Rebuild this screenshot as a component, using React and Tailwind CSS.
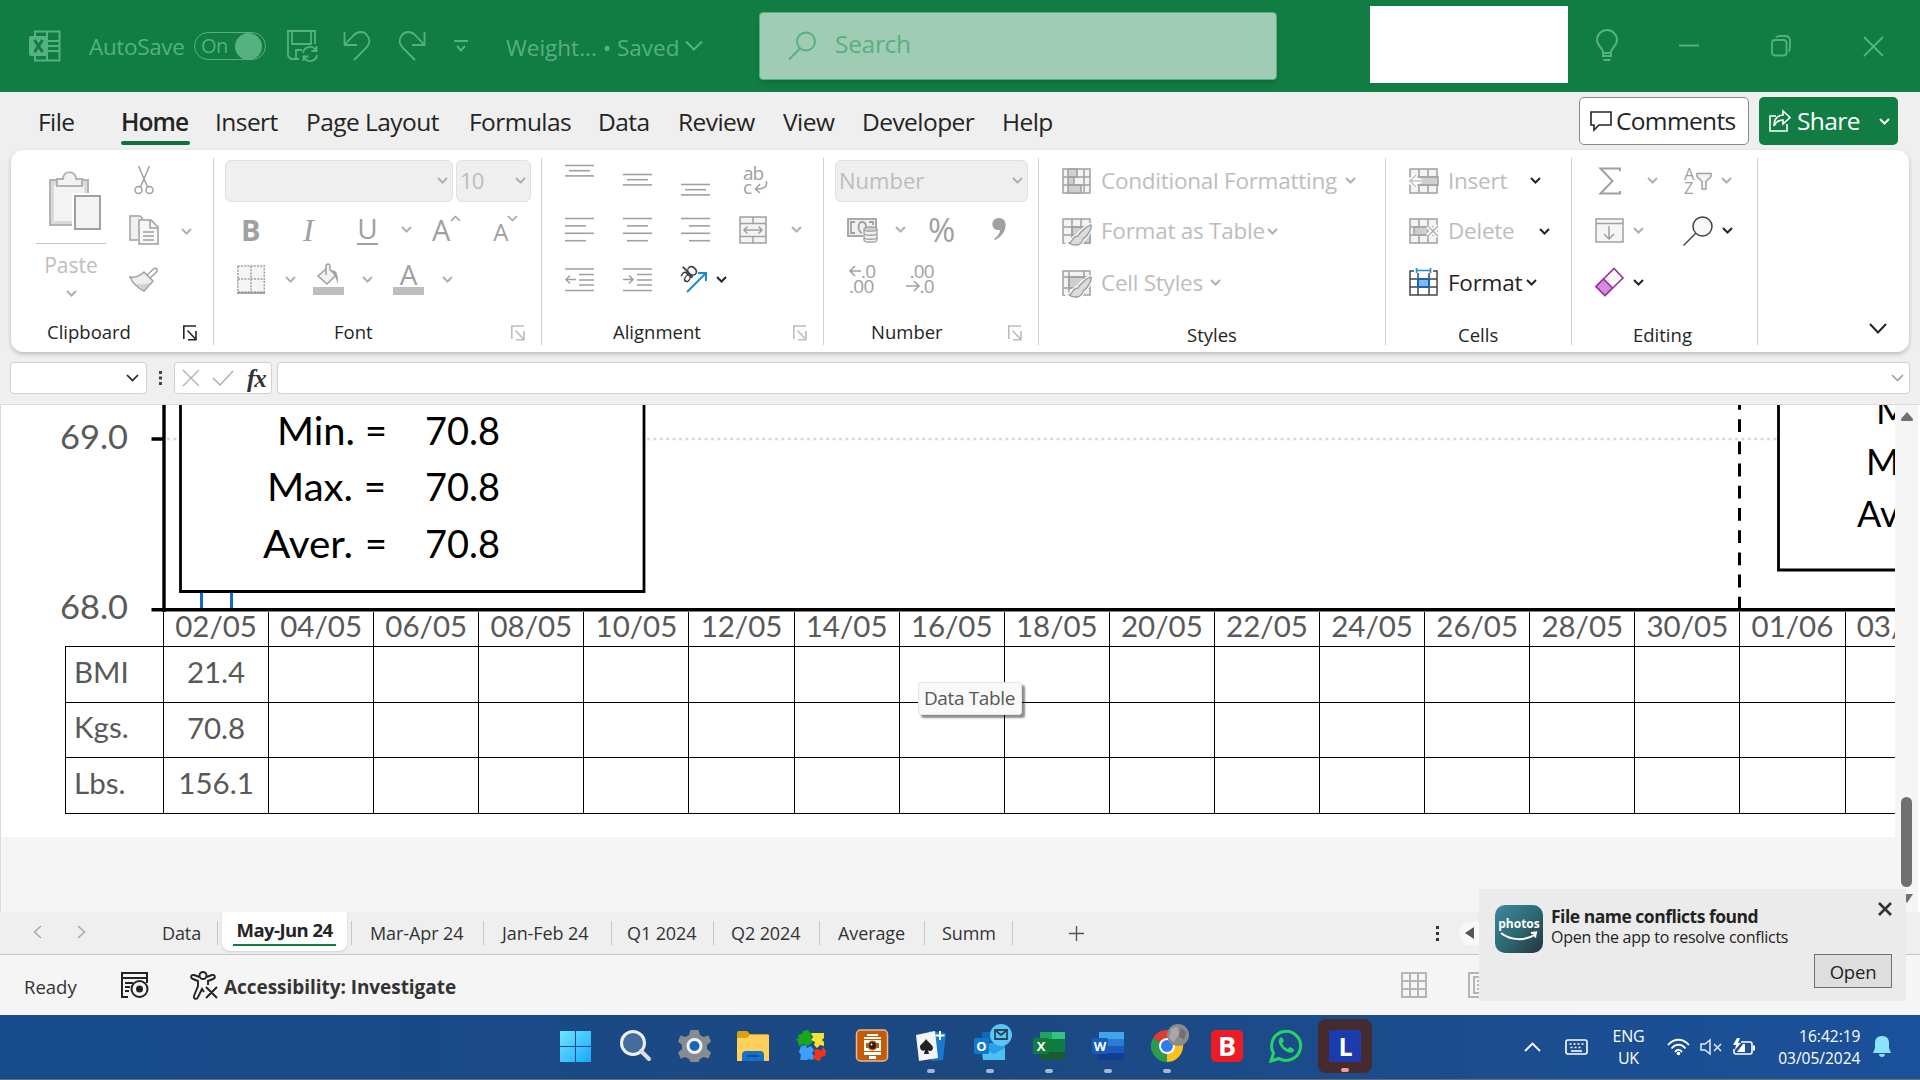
import React from 'react';

const GRAY = '#a0a0a0';
const DARK = '#242424';
const MINT = '#55b17f';

const Ico = ({ w, h, className = '', stroke = GRAY, sw = 1.5, children }) => (
  <svg
    width={w}
    height={h}
    viewBox={`0 0 ${w} ${h}`}
    fill="none"
    stroke={stroke}
    strokeWidth={sw}
    className={`shrink-0 overflow-visible ${className}`}
  >
    {children}
  </svg>
);

const Chev = ({ className = '', color = '#b0b0b0' }) => (
  <Ico w={11} h={7} className={className} stroke={color} sw={2}>
    <path d="M1 1l4.500 4.500L10 1" />
  </Ico>
);

const Launcher = ({ className = '', color = '#bdbdbd' }) => (
  <Ico w={14} h={16} className={className} stroke={color} sw={1.6}>
    <path d="M.8 14V1H13M4.500 5.500l8 8.500M13 6v8.800H5" />
  </Ico>
);

const Group = ({ className, label, labelClass, launcher, children }) => (
  <div className={`flex h-[187px] shrink-0 flex-col whitespace-nowrap border-r border-[#d1d1d1] ${className}`}>
    {children}
    <div className="flex h-[38px] items-end">
      <span className={`text-[18.500px] leading-[19px] text-[#242424] ${labelClass}`}>{label}</span>
      {launcher}
    </div>
  </div>
);

const TitleBar = () => (
  <div className="flex h-[92px] shrink-0 items-center bg-[#117d43] text-[#55b17f]">
    <Ico w={32} h={32} className="ml-[29px]" stroke={MINT} sw={2}>
      <path d="M6 6V1.500h24.500v29H6V26M18 1v30M6 11h24M18 16h12M6 21h24" />
      <rect x="0" y="6" width="19" height="20" rx="2" fill={MINT} stroke="none" />
      <path d="M5.500 10l8 12M13.500 10l-8 12" stroke="#117d43" strokeWidth="3" />
    </Ico>
    <span className="ml-[28px] w-[105px] whitespace-nowrap pt-[2px] text-[22.500px] tracking-[-0.350px]">AutoSave</span>
    <div className="flex h-[28px] w-[72px] items-center rounded-full border-[1.500px] border-[#55b17f] pl-[6px]">
      <span className="w-[34px] text-[20px] leading-none tracking-[-0.500px]">On</span>
      <span className="h-[27px] w-[27px] shrink-0 rounded-full bg-[#55b17f]" />
    </div>
    <Ico w={31} h={32} className="ml-[21px]" stroke={MINT} sw={1.8}>
      <path d="M12 29H4l-3-3V1h27v13M5 1v13h19V1M9 28v-8h6" />
      <path d="M16 23a7 7 0 0 1 13-2.500M29.500 16v5h-5M30 25a7 7 0 0 1-13 2.500M16.500 31v-4.500h5" />
    </Ico>
    <Ico w={28} h={30} className="ml-[25px]" stroke={MINT} sw={1.8}>
      <path d="M1.500 1v13H14M1.500 14L11 4c4-4 10-4 13 0s3 9-1 13L11 29" />
    </Ico>
    <Ico w={28} h={30} className="ml-[27px]" stroke={MINT} sw={1.8}>
      <path d="M26.500 1v13H14M26.500 14L17 4C13 0 7 0 4 4s-3 9 1 13l12 12" />
    </Ico>
    <Ico w={14} h={14} className="ml-[28px]" stroke={MINT} sw={2}>
      <path d="M0 2h14M3 7l4 4.500L11 7" />
    </Ico>
    <span className="ml-[38px] w-[180px] whitespace-nowrap pt-[4px] text-[22.500px]">Weight... • Saved</span>
    <Ico w={18} h={12} className="-ml-px" stroke={MINT} sw={2}>
      <path d="M1 1.500l8 8 8-8" />
    </Ico>
    <div className="ml-[56px] flex h-[68px] w-[518px] items-center rounded border border-[#55b17f] bg-[#a0cbb5] shadow-md">
      <Ico w={29} h={30} className="ml-[28px]" stroke={MINT} sw={2}>
        <circle cx="18" cy="10.500" r="9" />
        <path d="M12 17.500L1 28.500" />
      </Ico>
      <span className="ml-[18px] pb-[3px] text-[24.500px] tracking-[-0.300px]">Search</span>
    </div>
    <div className="mb-[3px] ml-[93px] h-[77px] w-[198px] bg-white" />
    <Ico w={24} h={32} className="ml-[27px]" stroke={MINT} sw={2}>
      <path d="M8 22c0-4-6-6-6-12a10 10 0 0 1 20 0c0 6-6 8-6 12v4H8zM8 23h8M8.500 30h7" />
    </Ico>
    <Ico w={20} h={4} className="ml-[60px]" stroke={MINT} sw={2}>
      <path d="M0 1.500h20" />
    </Ico>
    <Ico w={20} h={22} className="ml-[72px]" stroke={MINT} sw={1.8}>
      <rect x="1" y="5" width="14.500" height="15.500" rx="3" />
      <path d="M5 2.500C6 1 7 1 9 1h5c3 0 5 2 5 5v6c0 2 0 3-1.500 4.500" />
    </Ico>
    <Ico w={21} h={21} className="ml-[72px]" stroke={MINT} sw={1.8}>
      <path d="M1 1l19 19M20 1L1 20" />
    </Ico>
  </div>
);

const MENU = [
  ['File', 'w-[83px]'],
  ['Home', 'w-[94px]'],
  ['Insert', 'w-[91px]'],
  ['Page Layout', 'w-[163px]'],
  ['Formulas', 'w-[129px]'],
  ['Data', 'w-[80px]'],
  ['Review', 'w-[105px]'],
  ['View', 'w-[79px]'],
  ['Developer', 'w-[140px]'],
  ['Help', 'w-[60px]'],
];

const MenuBar = () => (
  <div className="flex h-[58px] shrink-0 items-center bg-[#efefef] text-[24.500px] tracking-[-0.550px] text-[#242424]">
    <div className="flex h-full flex-1 items-center pl-[38px]">
      {MENU.map(([name, width]) => (
        <div key={name} className={`shrink-0 whitespace-nowrap pt-[2px] ${width}`}>
          {name === 'Home' ? (
            <div className="w-[69px] pt-[4px] font-semibold tracking-[-0.950px]">
              <div className="leading-[38px]">{name}</div>
              <div className="h-[4px] rounded-full bg-[#0f703b]" />
            </div>
          ) : (
            name
          )}
        </div>
      ))}
    </div>
    <div className="flex h-[48px] w-[170px] items-center rounded-[5px] border border-[#8a8a8a] bg-white pl-[10px]">
      <Ico w={22} h={22} stroke={DARK} sw={1.6}>
        <path d="M1 2h20v13H9l-5 5v-5H1z" />
      </Ico>
      <span className="ml-[4px] tracking-[-0.650px]">Comments</span>
    </div>
    <div className="ml-[10px] mr-[22px] flex h-[48px] w-[139px] items-center rounded-[5px] bg-[#117d43] pl-[10px] text-white">
      <Ico w={23} h={22} stroke="#fff" sw={1.6}>
        <path d="M7 6H1v15h17v-7M14 1l7 6.500-7 6.500v-4c-4 0-7 2-9 6 0-6 3-10.500 9-11z" />
      </Ico>
      <span className="ml-[5px] w-[82px] tracking-[-0.600px]">Share</span>
      <Chev color="#fff" />
    </div>
  </div>
);

const ClipboardGroup = () => (
  <Group className="w-[203px]" label="Clipboard" labelClass="ml-[36px] w-[136px]" launcher={<Launcher color={DARK} />}>
    <div className="flex h-[145px]">
      <div className="ml-[25px] flex w-[70px] flex-col items-center">
        <Ico w={54} h={60} className="ml-[8px] mt-[13px]" sw={2}>
          <rect x="2" y="9" width="38" height="45" fill="#dadada" stroke="#b3b3b3" />
          <rect x="6" y="14" width="30" height="36" fill="#f3f3f3" stroke="none" />
          <path d="M9 15V8h6c0-9 13-9 13 0h6v7z" fill="#f3f3f3" stroke="#b3b3b3" />
          <path d="M24 22h30v38H24z" fill="#fff" stroke="none" />
          <rect x="27" y="25" width="25" height="33" fill="#f3f3f3" />
        </Ico>
        <div className="mt-[12px] h-px w-[70px] shrink-0 bg-[#c4c4c4]" />
        <div className="mt-[9px] text-[21px] leading-[24px] text-[#bdbdbd]">Paste</div>
        <Chev className="mt-[13px]" />
      </div>
      <div className="ml-[22px] flex w-[32px] flex-col items-center">
        <Ico w={20} h={30} className="mt-[7px]">
          <circle cx="4.500" cy="25" r="3.500" />
          <circle cx="15.500" cy="25" r="3.500" />
          <path d="M4.500 1l9 21M15.500 1l-9 21" />
        </Ico>
        <Ico w={30} h={30} className="mt-[20px]">
          <path d="M9 25H1V1h10l3 3" fill="#f0f0f0" />
          <path d="M10 5h12l7 7v17H10z" fill="#f7f7f7" />
          <path d="M21 5v8h8M14 17h11M14 21h11M14 25h11" />
        </Ico>
        <Ico w={30} h={26} className="mt-[22px]">
          <path d="M1 10c6 1 10-1 14-5l9 9-9 10C9 21 4 17 1 10z" fill="#eee" />
          <path d="M6 17c6 1 10 0 15-1l-6 7z" fill="#cfcfcf" stroke="none" />
          <path d="M18 8l7-6.500c2-1 4 1 3 3L21 11" />
        </Ico>
      </div>
      <Chev className="ml-[21px] mt-[70px]" />
    </div>
  </Group>
);

const FontGroup = () => (
  <Group className="w-[328px]" label="Font" labelClass="ml-[120px] w-[177px]" launcher={<Launcher />}>
    <div className="flex h-[46px] items-center">
      <div className="ml-[11px] flex h-[42px] w-[228px] items-center justify-end rounded-md border border-[#e0e0e0] bg-[#efefef] pr-[4px]">
        <Chev />
      </div>
      <div className="ml-[3px] flex h-[42px] w-[75px] items-center justify-between rounded-md border border-[#e0e0e0] bg-[#efefef] pl-[3px] pr-[4px] text-[22px] tracking-[-0.800px] text-[#bdbdbd]">
        10
        <Chev />
      </div>
    </div>
    <div className="flex h-[52px] items-center leading-none text-[#a0a0a0]">
      <span className="ml-[27px] w-[62px] text-[29px] font-bold">B</span>
      <span className="w-[54px] font-[Liberation_Serif] text-[32px] italic">I</span>
      <span className="flex h-[31px] w-[21px] justify-center border-b-2 border-[#a0a0a0] text-[28px]">U</span>
      <Chev className="ml-[23px]" />
      <span className="ml-[20px] text-[29px]">A</span>
      <Ico w={11} h={7} className="mb-[22px]" sw={1.5}>
        <path d="M1 6l4.500-4.500L10 6" />
      </Ico>
      <span className="ml-[32px] pt-[4px] text-[24px]">A</span>
      <Ico w={11} h={7} className="mb-[22px] ml-[-2px]" sw={1.5}>
        <path d="M1 1l4.500 4.500L10 1" />
      </Ico>
    </div>
    <div className="flex h-[47px] items-center">
      <Ico w={28} h={29} className="ml-[23px]">
        <path d="M.8 1h26.500v26H.8zM14 1v26M1 14h26" strokeDasharray="2 1.200" fill="#f5f5f5" />
        <path d="M0 28h28" stroke="#8a8a8a" />
      </Ico>
      <Chev className="ml-[20px]" />
      <Ico w={31} h={32} className="ml-[17px]">
        <path d="M13 6L5 13l9 8 9-9-6-5V4c0-4-4-4-4 0v8" fill="#f3f3f3" />
        <path d="M18 7c6 0 7 4 7 14-2-4-2-7-4-9z" fill="#a0a0a0" stroke="none" />
        <rect x="0" y="24" width="31" height="8" fill="#bdbdbd" stroke="none" />
      </Ico>
      <Chev className="ml-[18px]" />
      <div className="ml-[20px] flex h-[32px] w-[31px] flex-col items-center border-b-[8px] border-[#bdbdbd] text-[28px] leading-[22px] text-[#a0a0a0]">A</div>
      <Chev className="ml-[18px]" />
    </div>
  </Group>
);

// ruled lines, each given as [start, end]
const Lines = ({ rows, gap = 7.4, className }) => (
  <Ico w={29} h={25} className={className} sw={1.6}>
    {rows.map(([a, b], i) => (
      <path key={i} d={`M${a} ${1.5 + i * gap}H${b}`} />
    ))}
  </Ico>
);

const AlignmentGroup = () => (
  <Group className="w-[282px]" label="Alignment" labelClass="ml-[71px] w-[180px]" launcher={<Launcher />}>
    <div className="flex h-[46px] items-center">
      <Lines className="mb-[8px] ml-[23px]" gap={5.2} rows={[[0, 29], [4, 25], [0, 29]]} />
      <Lines className="mt-[10px] ml-[29px]" gap={5.2} rows={[[0, 29], [4, 25], [0, 29]]} />
      <Lines className="mt-[30px] ml-[29px]" gap={5.2} rows={[[0, 29], [4, 25], [0, 29]]} />
      <div className="ml-[33px] flex w-[26px] flex-col text-[19px] leading-[13px] text-[#a0a0a0]">
        <span className="tracking-[-1px]">ab</span>
        <span className="flex items-center">
          c
          <Ico w={14} h={14} className="ml-[2px]">
            <path d="M12 1c2 5-1 8-10 8M6 4L1.500 9 6 13" />
          </Ico>
        </span>
      </div>
    </div>
    <div className="flex h-[52px] items-center">
      <Lines className="ml-[23px]" rows={[[0, 29], [0, 21], [0, 29], [0, 21]]} />
      <Lines className="ml-[29px]" rows={[[0, 29], [4, 25], [0, 29], [4, 25]]} />
      <Lines className="ml-[29px]" rows={[[0, 29], [8, 29], [0, 29], [8, 29]]} />
      <Ico w={28} h={28} className="ml-[29px]">
        <rect x="1" y="1" width="26" height="26" fill="#f3f3f3" />
        <path d="M1 7.500h26M1 20.500h26M14 1v6.500M14 20.500V27M5 14h18M8.500 10.500L5 14l3.500 3.500M19.500 10.500L23 14l-3.500 3.500" />
      </Ico>
      <Chev className="ml-[24px]" />
    </div>
    <div className="flex h-[47px] items-center">
      <Ico w={29} h={25} className="ml-[23px]">
        <path d="M0 2h29M14 7.500h15M14 13h15M14 18h15M0 23.500h29M1 12.500h10M5 8.500l-4 4 4 4" />
      </Ico>
      <Ico w={29} h={25} className="ml-[29px]">
        <path d="M0 2h29M14 7.500h15M14 13h15M14 18h15M0 23.500h29M0 12.500h10M6 8.500l4 4-4 4" />
      </Ico>
      <Ico w={30} h={30} className="ml-[26px]" stroke="#1e88d2" sw={2}>
        <path d="M9 28L27 10M20 9h8v8" />
        <text transform="translate(8 20) rotate(-45)" fill="#333" stroke="none" fontSize="19" textLength="19">ab</text>
      </Ico>
      <Chev className="ml-[8px]" color={DARK} />
    </div>
  </Group>
);

const NumberGroup = () => (
  <Group className="w-[215px]" label="Number" labelClass="ml-[47px] w-[137px]" launcher={<Launcher />}>
    <div className="flex h-[46px] items-center">
      <div className="ml-[11px] flex h-[42px] w-[193px] items-center justify-between rounded-md border border-[#e0e0e0] bg-[#efefef] pl-[3px] pr-[4px] text-[22px] text-[#bdbdbd]">
        Number
        <Chev />
      </div>
    </div>
    <div className="flex h-[52px] items-center">
      <Ico w={31} h={26} className="ml-[23px]" sw={1.8}>
        <rect x="1" y="2" width="28" height="17" fill="#f0f0f0" />
        <path d="M8 5H4v11h4M22 5h4v3M15 16c-5-2-4-11 0-11s4 4 4 5" />
        <path d="M16 11h15v15H16z" fill="#fff" stroke="none" />
        <path d="M17 12v11c0 3 13 3 13 0V12M17 16c0 3 13 3 13 0M17 20c0 3 13 3 13 0" fill="#f0f0f0" strokeWidth="1.300" />
        <ellipse cx="23.500" cy="12" rx="6.500" ry="2.200" fill="#d0d0d0" strokeWidth="1.300" />
      </Ico>
      <Chev className="ml-[17px]" />
      <span className="ml-[22px] w-[64px] text-[33px] leading-none text-[#a0a0a0]">%</span>
      <Ico w={14} h={23}>
        <path d="M7 0c10 0 9 16-4 22l-1-1c4-3 6-6 6-9C-2 13-2 0 7 0z" fill={GRAY} stroke="none" />
      </Ico>
    </div>
    <div className="flex h-[47px] items-center text-[19px] leading-[15px] text-[#a0a0a0]">
      <div className="ml-[25px] flex w-[56px] flex-col tracking-[-0.700px]">
        <span className="flex">
          <Ico w={12} h={13}>
            <path d="M12 7H1M6 2L1 7l5 5" />
          </Ico>
          .0
        </span>
        <span>.00</span>
      </div>
      <div className="flex w-[29px] flex-col items-end tracking-[-0.700px]">
        <span>.00</span>
        <span className="flex">
          <Ico w={14} h={13}>
            <path d="M0 7h13M8 2l5 5-5 5" />
          </Ico>
          .0
        </span>
      </div>
    </div>
  </Group>
);

const Cells = ({ children, stroke = GRAY, fill = '#f3f3f3' }) => (
  <Ico w={30} h={30} stroke={stroke} sw={1.5}>
    <rect x="1" y="3" width="27" height="24" fill={fill} />
    {children}
  </Ico>
);

const Brush = () => (
  <>
    <path d="M29 9c-3 0-12 8-13 11-6 0-5 6-9 7 6 4 13 2 14-4 4-2 9-10 8-14z" fill="#e6e6e6" stroke="#fff" strokeWidth="4" />
    <path d="M29 9c-3 0-12 8-13 11-6 0-5 6-9 7 6 4 13 2 14-4 4-2 9-10 8-14z" fill="#dcdcdc" />
  </>
);

const StylesGroup = () => (
  <Group className="w-[347px] text-[22.500px] tracking-[-0.250px] text-[#bdbdbd]" label="Styles" labelClass="relative top-[2px] ml-[148px] tracking-normal">
    <div className="flex h-[46px] items-center">
      <div className="ml-[23px] mr-[9px]">
        <Cells>
          <path d="M6 3h9v8H6zM6 11h6v8H6zM6 19h13v8H6z" fill="#cfcfcf" />
          <path d="M1 11h27M1 19h27M22 3v24" />
        </Cells>
      </div>
      <span className="w-[244px]">Conditional Formatting</span>
      <Chev />
    </div>
    <div className="flex h-[54px] items-center pt-px">
      <div className="ml-[23px] mr-[9px]">
        <Cells>
          <path d="M10 11h18v16H10z" fill="#cfcfcf" />
          <path d="M1 11h27M1 19h27M10 3v24M19 3v24" />
          <Brush />
        </Cells>
      </div>
      <span className="w-[166px]">Format as Table</span>
      <Chev />
    </div>
    <div className="flex h-[46px] items-center pt-[4px]">
      <div className="ml-[23px] mr-[9px]">
        <Cells>
          <path d="M7 9h15v11H7z" fill="#cfcfcf" />
          <path d="M1 9h27M1 20h27M7 3v24M22 3v24" />
          <Brush />
        </Cells>
      </div>
      <span className="w-[109px]">Cell Styles</span>
      <Chev />
    </div>
  </Group>
);

const CellsGroup = () => (
  <Group className="w-[186px] text-[22.500px] tracking-[-0.250px] text-[#bdbdbd]" label="Cells" labelClass="relative top-[2px] ml-[72px] tracking-normal">
    <div className="flex h-[46px] items-center">
      <div className="ml-[23px] mr-[9px]">
        <Cells>
          <path d="M1 11h27M1 19h27M10 3v8M19 3v8M10 19v8M19 19v8" />
          <path d="M12 11h17v8H12z" fill="#cfcfcf" />
          <path d="M0 15h13M7 9l-6 6 6 6" stroke="#fff" strokeWidth="5" />
          <path d="M0 15h13M7 9l-6 6 6 6" stroke="#c4c4c4" />
        </Cells>
      </div>
      <span className="w-[82px]">Insert</span>
      <Chev color={DARK} />
    </div>
    <div className="flex h-[54px] items-center pt-px">
      <div className="ml-[23px] mr-[9px]">
        <Cells>
          <path d="M1 11h27M1 19h27M10 3v8M19 3v8M10 19v8M19 19v8" />
          <path d="M5 11h14v8H5z" fill="#cfcfcf" />
          <path d="M19 10l10 10M29 10L19 20" stroke="#fff" strokeWidth="5" />
          <path d="M19 10l10 10M29 10L19 20" stroke="#b0b0b0" />
        </Cells>
      </div>
      <span className="w-[91px]">Delete</span>
      <Chev color={DARK} />
    </div>
    <div className="flex h-[46px] items-center pt-[4px] text-[#242424]">
      <div className="ml-[23px] mr-[9px]">
        <Cells stroke="#444" fill="#fff">
          <path d="M5 0h19v5H5z" fill="#fff" stroke="none" />
          <path d="M1 11h27M1 19h27M9 5v22M20 5v22" />
          <rect x="9" y="11" width="11" height="8" fill="#83b9ec" stroke="#1567b5" strokeWidth="2" />
          <path d="M7.500 2.500h14M7.500 0v5M21.500 0v5" stroke="#1e88d2" strokeWidth="1.600" />
        </Cells>
      </div>
      <span className="w-[78px]">Format</span>
      <Chev color={DARK} />
    </div>
  </Group>
);

const EditingGroup = () => (
  <Group className="w-[186px]" label="Editing" labelClass="relative top-[2px] ml-[61px]">
    <div className="flex h-[46px] items-center">
      <Ico w={22} h={28} className="ml-[27px]" sw={2}>
        <path d="M21 4V1.500H1.500L13.500 14 1.500 26.500H21V24" />
      </Ico>
      <Chev className="ml-[26px]" />
      <div className="ml-[26px] flex flex-col text-[16.500px] leading-[14px] text-[#a0a0a0]">
        <span>A</span>
        <span>Z</span>
      </div>
      <Ico w={16} h={18} className="ml-[2px]">
        <path d="M1 1.500h14v3l-5 5V17H6V9.500l-5-5z" fill="#f3f3f3" />
      </Ico>
      <Chev className="ml-[9px]" />
    </div>
    <div className="flex h-[54px] items-center">
      <Ico w={29} h={25} className="ml-[23px]">
        <rect x="1" y="1" width="27" height="23" fill="#f5f5f5" />
        <path d="M1 5.500h27M14 8v13M9 16l5 5 5-5" />
      </Ico>
      <Chev className="ml-[9px]" />
      <Ico w={30} h={30} className="ml-[39px]" stroke="#444" sw={1.5}>
        <circle cx="19.500" cy="10.500" r="9.500" fill="#f8f8f8" />
        <path d="M12.500 17.500L.5 29.500" />
      </Ico>
      <Chev className="ml-[9px]" color={DARK} />
    </div>
    <div className="flex h-[46px] items-center pt-[3px]">
      <Ico w={29} h={30} className="ml-[23px]" stroke="#9b2fa3" sw={1.6}>
        <path d="M1 19.500L19 1.500l9 9.500-18 17.500z" fill="#fafafa" />
        <path d="M1 19.500l7.500-7.500 9 9L10 28.500z" fill="#d28fd8" />
      </Ico>
      <Chev className="ml-[9px]" color={DARK} />
    </div>
  </Group>
);

const Ribbon = () => (
  <div className="ml-[11px] mr-[11px] flex h-[202px] shrink-0 items-center rounded-xl bg-white shadow-[0_2px_4px_rgba(0,0,0,0.22)]">
    <ClipboardGroup />
    <FontGroup />
    <AlignmentGroup />
    <NumberGroup />
    <StylesGroup />
    <CellsGroup />
    <EditingGroup />
    <Ico w={18} h={11} className="ml-[111px] mt-[155px]" stroke={DARK} sw={2}>
      <path d="M1 1l8 8.500L17 1" />
    </Ico>
  </div>
);

const FormulaBar = () => (
  <div className="flex h-[52px] shrink-0 items-center pl-[10px]">
    <div className="flex h-[32px] w-[137px] items-center justify-end rounded border border-[#d1d1d1] bg-white pr-[7px]">
      <Ico w={13} h={8} stroke={DARK} sw={1.7}>
        <path d="M1 1l5.500 5.500L12 1" />
      </Ico>
    </div>
    <Ico w={4} h={16} className="ml-[12px]" stroke="none">
      <path d="M0 1h3v3H0zM0 6.500h3v3H0zM0 12h3v3H0z" fill="#444" />
    </Ico>
    <div className="ml-[11px] flex h-[32px] w-[98px] items-center rounded border border-[#d1d1d1] bg-white">
      <Ico w={18} h={18} className="ml-[7px]" stroke="#b0b0b0" sw={1.3}>
        <path d="M1 1l16 16M17 1L1 17" />
      </Ico>
      <Ico w={22} h={16} className="ml-[12px]" stroke="#b0b0b0" sw={1.5}>
        <path d="M1 8l7 7L21 1" />
      </Ico>
      <span className="ml-[13px] font-[Liberation_Serif] text-[25px] font-bold italic leading-none tracking-[-1px] text-[#333]">
        fx
      </span>
    </div>
    <div className="ml-[5px] flex h-[32px] w-[1633px] items-center justify-end rounded border border-[#d1d1d1] bg-white pr-[5px]">
      <Ico w={13} h={8} stroke="#9a9a9a" sw={1.5}>
        <path d="M1 1l5.500 5.500L12 1" />
      </Ico>
    </div>
  </div>
);

const STATS = [
  { label: 'Min.', x: 277, w: 78, y: 41, eq: 366 },
  { label: 'Max.', x: 267, w: 86, y: 97, eq: 365 },
  { label: 'Aver.', x: 263, w: 90, y: 154, eq: 366 },
];

const DATES = [
  '02/05', '04/05', '06/05', '08/05', '10/05', '12/05', '14/05', '16/05', '18/05',
  '20/05', '22/05', '24/05', '26/05', '28/05', '30/05', '01/06', '03/06',
];

const ROWS = [
  { name: 'BMI', first: '21.4' },
  { name: 'Kgs.', first: '70.8' },
  { name: 'Lbs.', first: '156.1' },
];

const Plot = () => (
  <svg width="1919" height="208" viewBox="0 0 1919 208" className="block shrink-0 overflow-visible" fontFamily="Lato, sans-serif">
    <path d="M167 35H1778" stroke="#d9d9d9" strokeWidth="2.500" strokeDasharray="3 3.400" />
    <path d="M1739.500 0V204" stroke="#000" strokeWidth="3" strokeDasharray="12.800 9.400" strokeDashoffset="7" />
    <path d="M201.500 186v20M231.500 186v20" stroke="#0f6fc6" strokeWidth="3" />
    <path d="M164 0v208M151.500 35h12" stroke="#000" strokeWidth="3.400" />
    <path d="M151.500 205.700H1919" stroke="#000" strokeWidth="3.600" />
    <path d="M180.500 -5H644V187.500H180.500z" fill="#fff" stroke="#000" strokeWidth="2.800" />
    <path d="M1778.500 -5H1925V166H1778.500z" fill="#fff" stroke="#000" strokeWidth="2.800" />
    <g fill="#595959" fontSize="32">
      <text x="60" y="45" textLength="68" lengthAdjust="spacingAndGlyphs">69.0</text>
      <text x="60" y="215" textLength="68" lengthAdjust="spacingAndGlyphs">68.0</text>
    </g>
    <g fill="#000" fontSize="38">
      {STATS.map(({ label, x, w, y, eq }) => (
        <React.Fragment key={label}>
          <text x={x} y={y} textLength={w} lengthAdjust="spacingAndGlyphs">{label}</text>
          <text x={eq - 1} y={y} textLength="22" lengthAdjust="spacingAndGlyphs">=</text>
          <text x="425" y={y} textLength="75" lengthAdjust="spacingAndGlyphs">70.8</text>
        </React.Fragment>
      ))}
    </g>
    <g fill="#000" fontSize="36">
      <text x="1876" y="20">Min.</text>
      <text x="1866" y="71">Max.</text>
      <text x="1857" y="123">Aver.</text>
    </g>
  </svg>
);

const DataTable = () => (
  <div className="ml-[66px] grid w-[1885px] grid-cols-[98px_repeat(17,105.100px)] grid-rows-[35px_56px_55px_56px] font-[Lato] text-[29.500px] text-[#595959]">
    <div className="-ml-px border-b border-r border-black" />
    {DATES.map((d) => (
      <div key={d} className="flex items-center justify-center border-b border-r border-black pb-[6px] leading-none">
        {d}
      </div>
    ))}
    {ROWS.map(({ name, first }) => (
      <React.Fragment key={name}>
        <div className="-ml-px flex items-center border-b border-l border-r border-black pb-[5px] pl-[8px]">{name}</div>
        {DATES.map((d, i) => (
          <div key={d} className="flex items-center justify-center border-b border-r border-black pb-[4px]">
            {i === 0 ? first : null}
          </div>
        ))}
      </React.Fragment>
    ))}
  </div>
);

const Sheet = () => (
  <div className="flex h-[508px] shrink-0 border-l border-t border-[#dcdcdc]">
    <div className="flex w-[1894px] flex-col overflow-hidden bg-[#f5f5f5]">
      <div className="relative h-[432px] w-[1919px] shrink-0 bg-white">
        <div className="-ml-px -mt-px flex flex-col">
          <Plot />
          <DataTable />
        </div>
        <div className="absolute left-[917px] top-[277px] flex h-[33px] w-[104px] items-center justify-center rounded-[3px] border border-[#e3e3e3] bg-[#f9f9f9] pr-px text-[19px] tracking-[-0.350px] text-[#575757] shadow-[3px_3px_2px_rgba(0,0,0,0.45)]">
          Data Table
        </div>
      </div>
    </div>
    <div className="flex w-[23px] flex-col items-center bg-[#f5f5f5] pt-[7px]">
      <Ico w={12} h={9} stroke="none">
        <path d="M6 0l6 7c0 1 0 2-1 2H1C0 9 0 8 0 7z" fill="#707070" />
      </Ico>
      <div className="mt-[376px] h-[90px] w-[11px] rounded-full bg-[#707070]" />
      <Ico w={12} h={9} className="mt-[7px]" stroke="none">
        <path d="M0 0h12L6 9z" fill="#707070" />
      </Ico>
    </div>
    <div className="flex-1 bg-white" />
  </div>
);

const TABS = [
  ['Mar-Apr 24', 'w-[132px] pl-[18px]'],
  ['Jan-Feb 24', 'w-[128px] pl-[18px]'],
  ['Q1 2024', 'w-[102px] pl-[15px]'],
  ['Q2 2024', 'w-[106px] pl-[17px]'],
  ['Average', 'w-[105px] pl-[18px]'],
  ['Summ', 'w-[88px] pl-[17px]'],
];

const SheetTabs = () => (
  <div className="flex h-[43px] shrink-0 items-center border-b border-[#c6c6c6] bg-[#efefef] text-[18px] tracking-[-0.100px] text-[#333]">
    <Ico w={9} h={14} className="ml-[33px]" stroke="#a8a8a8">
      <path d="M8 0L1.500 6 8 12" />
    </Ico>
    <Ico w={9} h={14} className="ml-[35px]" stroke="#a8a8a8">
      <path d="M1 0l6.500 6L1 12" />
    </Ico>
    <span className="ml-[76px] flex h-[24px] w-[56px] items-center border-r border-[#c6c6c6]">Data</span>
    <div className="ml-[4px] flex h-[39px] w-[125px] flex-col items-center self-start rounded-b-lg bg-white pt-[5px] font-bold tracking-[-0.550px] shadow-sm">
      <span className="whitespace-nowrap text-[18.500px] leading-[26px] text-[#242424]">May-Jun 24</span>
      <span className="mt-px h-[2px] w-[103px] shrink-0 bg-[#117d43]" />
    </div>
    <div className="ml-[4px] flex">
      <span className="h-[24px] border-l border-[#c6c6c6]" />
      {TABS.map(([name, cls]) => (
        <span key={name} className={`flex h-[24px] items-center whitespace-nowrap border-r border-[#c6c6c6] ${cls}`}>
          {name}
        </span>
      ))}
    </div>
    <Ico w={15} h={15} className="ml-[56px]" stroke="#555" sw={1.4}>
      <path d="M7.500 0v15M0 7.500h15" />
    </Ico>
    <Ico w={3} h={15} className="ml-[352px]" stroke="none">
      <path d="M0 0h3v3H0zM0 6h3v3H0zM0 12h3v3H0z" fill="#333" />
    </Ico>
    <div className="ml-[20px] flex h-[23px] w-[36px] items-center rounded-full bg-[#f8f8f8] pl-[6px]">
      <Ico w={10} h={12} stroke="none">
        <path d="M9 0v12L0 6z" fill="#555" />
      </Ico>
    </div>
  </div>
);

const StatusBar = () => (
  <div className="flex h-[60px] shrink-0 items-center bg-[#f5f5f5] text-[18.500px] text-[#333]">
    <span className="ml-[24px] w-[97px] pt-[4px]">Ready</span>
    <Ico w={28} h={26} stroke="#222" sw={2}>
      <path d="M7 25H1V1h25v10M1 6h25M4 11h8M4 15h5M4 19h4" />
      <circle cx="18.500" cy="17" r="8" fill="#f5f5f5" />
      <circle cx="18.500" cy="17" r="3.500" fill="#222" stroke="none" />
    </Ico>
    <Ico w={29} h={28} className="ml-[41px]" stroke="#222" sw={1.9}>
      <circle cx="13" cy="4.500" r="3.500" />
      <path d="M9.500 6L4 4C1 3 0 7 3 8l5 2v5L4 25c-1 3 3 4 4 1l4-8 2 3M16.500 6L22 4c3-1 4 3 1 4l-5 2v4M16 16l11 11M27 16L16 27" />
    </Ico>
    <span className="ml-[5px] w-[1177px] pt-[4px] text-[19px] font-bold tracking-[-0.050px]">Accessibility: Investigate</span>
    <Ico w={26} h={26} stroke="#b5b5b5" sw={2}>
      <path d="M1 1h24v24H1zM9 1v24M17 1v24M1 9h24M1 17h24" />
    </Ico>
    <Ico w={26} h={26} className="ml-[41px]" stroke="#b5b5b5" sw={2}>
      <path d="M1 1h24v24H1zM6 5h14v16H6zM9 9h8M9 13h8M9 17h8" />
    </Ico>
  </div>
);

const TaskIcon = ({ children, dot }) => (
  <div className="flex w-[59.200px] shrink-0 flex-col items-center pt-[8px]">
    <svg width="44" height="44" viewBox="0 0 44 44">{children}</svg>
    {dot && <span className="mt-[2px] h-[4px] w-[8px] rounded-full bg-[#a5b6d2]" />}
  </div>
);

const Letter = ({ children, x = 13.5, y = 28, size = 13 }) => (
  <text x={x} y={y} textAnchor="middle" fontFamily="Open Sans" fontWeight="bold" fontSize={size} fill="#fff">{children}</text>
);

const Taskbar = () => (
  <div className="flex h-[65px] shrink-0 border-b border-[#6c6f63] bg-gradient-to-r from-[#174b8d] via-[#1b4881] to-[#1b519b] text-white">
    <div className="ml-[546px] flex">
      <TaskIcon>
        <defs>
          <linearGradient id="win" x1="0" y1="0" x2="1" y2="1">
            <stop offset="0" stopColor="#6fe6ff" />
            <stop offset="1" stopColor="#17a7fb" />
          </linearGradient>
        </defs>
        <path d="M6 8h15v15H6zM22 8h15v15H22zM6 24h15v15H6zM22 24h15v15H22z" fill="url(#win)" />
      </TaskIcon>
      <TaskIcon>
        <circle cx="20" cy="20" r="11.500" fill="#456b9f" stroke="#efefef" strokeWidth="3" />
        <path d="M28 28l8 8" stroke="#ddd" strokeWidth="4" strokeLinecap="round" />
      </TaskIcon>
      <TaskIcon>
        <path
          d="M18.500 7h8l1.500 5 3.500 2 5-1.500 2.500 6-4 3.500v4l4 3.500-2.500 6-5-1.500-3.500 2-1.500 3h-8L17 36l-3.500-2-5 1.500-2.500-6 4-3.500v-4l-4-3.500 2.500-6 5 1.500L17 12z"
          fill="#878c91"
        />
        <circle cx="22.500" cy="23" r="6.500" fill="#1565b9" stroke="#eef2f6" strokeWidth="3" />
      </TaskIcon>
      <TaskIcon>
        <path d="M6 10q0-2 2-2h8l3 3h17q2 0 2 2v10H6z" fill="#dfa010" />
        <path d="M6 15h10l3-3h19v26H6z" fill="#ffd05c" />
        <path d="M11 38v-6q0-4 4-4h14q4 0 4 4v6z" fill="#1671c9" />
        <path d="M16 33h12" stroke="#0b4d92" strokeWidth="2" />
      </TaskIcon>
      <TaskIcon>
        <path d="M8 12l4-1 1-3 5-1 2 3 2 1-1 5 2 3-5 4-4-2-5 2-1-4-2-3 3-1z" fill="#17a81c" />
        <path d="M21 10h13v5l-2 2 2 2v4l-4-1-3 3-3-3 1-3-4-2 2-3z" fill="#f3e233" />
        <path d="M11 23l5-1 1 3 4-2 3 4-2 3 2 3-1 4-4-1-2 1H10l1-5-2-3z" fill="#3da0f5" />
        <path d="M24 27l4-1 3 2 2-4 3 4-1 5-4 1-1 4-4-1-3-2 2-4z" fill="#f5331d" />
      </TaskIcon>
      <TaskIcon>
        <rect x="6.500" y="7" width="31" height="31" rx="4" fill="#c55a08" stroke="#eab98f" strokeWidth="1.500" />
        <path d="M17 11h11v2H17zM14 14h17v2H14zM14 17h17v11H14zM14 29h17v3H14zM19 33h7v3h-7z" fill="#fff" />
        <path d="M16 20h2v5h-2zM27 20h2v5h-2z" fill="#c55a08" />
        <circle cx="22.500" cy="22.500" r="5" fill="#c55a08" />
        <circle cx="22.500" cy="22.500" r="3.500" fill="#222" />
        <circle cx="21.500" cy="21.500" r="1" fill="#fff" />
      </TaskIcon>
      <TaskIcon dot>
        <path d="M20 8l17 2-3 27-12 1z" fill="#1779cf" />
        <path d="M7 12l19-4 3 27-19 3z" fill="#f5f5f5" />
        <path d="M17 16c3 4 7 6 7 9s-4 4-5 2l1 4h-5l1-4c-2 2-5 0-5-3s4-4 6-8z" fill="#222" />
        <path d="M31 8v9M26.500 12.500h9" stroke="#fff" strokeWidth="2" />
      </TaskIcon>
      <TaskIcon dot>
        <path d="M14 9h16v10H14z" fill="#0f68b8" />
        <path d="M13 20h24v17H15z" fill="#28a0e8" />
        <path d="M14 24l12 7 11-6v12H15z" fill="#4fc0f5" />
        <rect x="6" y="15" width="15" height="16" rx="1.500" fill="#0f79d0" />
        <Letter>O</Letter>
        <circle cx="33" cy="12" r="11" fill="#5cc4f7" />
        <path d="M27 7h12v9H27zl6 5 6-5" fill="none" stroke="#25475c" strokeWidth="1.800" />
      </TaskIcon>
      <TaskIcon dot>
        <path d="M13 9h13v9H13z" fill="#21a366" />
        <path d="M25 9h13v7H25z" fill="#33c481" />
        <path d="M13 16h25v13H13z" fill="#107c41" />
        <path d="M13 29h25v8H13z" fill="#185c37" />
        <rect x="6" y="15" width="16" height="16" rx="1.500" fill="#107c41" />
        <Letter x={14}>X</Letter>
      </TaskIcon>
      <TaskIcon dot>
        <path d="M13 9h25v7H13z" fill="#41a5ee" />
        <path d="M13 16h25v7H13z" fill="#2b7cd3" />
        <path d="M13 23h25v7H13z" fill="#185abd" />
        <path d="M13 30h25v7H13z" fill="#103f91" />
        <rect x="6" y="15" width="16" height="16" rx="1.500" fill="#185abd" />
        <Letter x={14}>W</Letter>
      </TaskIcon>
      <TaskIcon dot>
        <path d="M22 23L8.100 15A16 16 0 0 1 35.900 15z" fill="#e33b2e" />
        <path d="M22 23L8.100 15A16 16 0 0 0 22 39z" fill="#2a9b4b" />
        <path d="M22 23L35.900 15A16 16 0 0 1 22 39z" fill="#fcc21b" />
        <circle cx="22" cy="23" r="8" fill="#fff" />
        <circle cx="22" cy="23" r="6" fill="#2f7cf0" />
        <circle cx="33" cy="12" r="11" fill="#8b8b8b" />
        <path d="M26 6l6-3 2 8-5 8-5-4z" fill="#a8a8a8" />
        <path d="M36 5l5 4-2 8-5-4z" fill="#6f6f6f" />
      </TaskIcon>
      <TaskIcon>
        <rect x="6" y="7" width="32" height="32" rx="5" fill="#ec1c24" />
        <Letter x={22} y={33} size={27}>B</Letter>
      </TaskIcon>
      <TaskIcon>
        <path d="M7 38l2.500-8A14.500 14.500 0 1 1 15 35.500z" fill="none" stroke="#25d366" strokeWidth="3" />
        <path d="M16 15c-3 3 0 8 3 11s8 5 10 3 1-3-1-4-3-1-4 1c-3-1-5-3-6-6 2-1 2-2 1-4s-2-2-3-1z" fill="#25d366" />
      </TaskIcon>
      <div className="ml-[3px] mt-[4px] flex h-[54px] w-[54px] flex-col items-center rounded-lg bg-[#452a2e] pt-[11px]">
        <span className="flex h-[32px] w-[32px] items-center justify-center bg-[#1c3cae] text-[25px] font-bold leading-none">L</span>
        <span className="mt-[6px] h-[4px] w-[8px] shrink-0 rounded-full bg-[#f59a94]" />
      </div>
    </div>
    <div className="flex flex-1 items-center pl-[152px] text-[17px]">
      <Ico w={17} h={10} stroke="#fff" sw={1.8}>
        <path d="M1 9l7.500-7.500L16 9" />
      </Ico>
      <Ico w={23} h={16} className="ml-[24px]" stroke="#fff" sw={1.6}>
        <rect x="1" y="1" width="21" height="14" rx="2" />
        <path d="M4.500 5h14M5.500 8.500h12" strokeDasharray="2 2" />
        <path d="M6 12h11" />
      </Ico>
      <div className="ml-[20px] w-[40px] text-center text-[16px] leading-[22px] tracking-[-0.300px]">
        ENG
        <br />
        UK
      </div>
      <Ico w={23} h={18} className="ml-[19px]" stroke="#fff" sw={1.8}>
        <path d="M1 7c6-7 15-7 21 0M4.500 10.500c4-5 10-5 14 0M8 14c2-3 5-3 7 0" />
        <circle cx="11.500" cy="15.500" r="1.800" fill="#fff" stroke="none" />
      </Ico>
      <Ico w={22} h={16} className="ml-[10px]" stroke="#e6ecf5" sw={1.5}>
        <path d="M1 5h4l5-4v14l-5-4H1zM14 5l7 7M21 5l-7 7" />
      </Ico>
      <Ico w={24} h={18} className="ml-[10px]" stroke="#fff" sw={1.6}>
        <path d="M9 4h9q2 0 2 2v8q0 2-2 2H4q-2 0-2-2v-3" />
        <path d="M21 7.500h2v5h-2zM5 14l6-8h2v8z" fill="#fff" stroke="none" />
        <path d="M5 0L1 7h3l-1 5 6-7H6l2-5z" fill="#fff" stroke="none" />
      </Ico>
      <div className="ml-[14px] w-[90px] text-right text-[15.500px] leading-[22px]">
        16:42:19
        <br />
        03/05/2024
      </div>
      <Ico w={18} h={22} className="ml-[13px]" stroke="none">
        <path d="M9 0c5 0 7 3 7 7v5l2 5H0l2-5V7c0-4 2-7 7-7zM6 18h6c0 4-6 4-6 0z" fill="#8ce4fb" />
      </Ico>
    </div>
  </div>
);

const Toast = () => (
  <div className="absolute left-[1479px] top-[889px] flex h-[112px] w-[427px] bg-[#ebebeb] text-[#1f2323]">
    <div className="ml-[16px] mt-[16px] flex h-[48px] w-[48px] flex-col items-center rounded-[10px] bg-gradient-to-br from-[#3f87a0] via-[#2d6a72] to-[#22343f] pt-[10px] text-white">
      <span className="text-[12px] font-bold leading-[17px]">photos</span>
      <Ico w={40} h={10} stroke="#fff" sw={2}>
        <path d="M2 1c10 8 25 8 35 1M32 1l5-.5-1 5" />
      </Ico>
    </div>
    <div className="ml-[8px] mt-[16px] w-[263px] whitespace-nowrap">
      <div className="text-[17.500px] font-bold leading-[22px] tracking-[-0.500px]">File name conflicts found</div>
      <div className="text-[16px] leading-[21px] tracking-[-0.250px]">Open the app to resolve conflicts</div>
    </div>
    <div className="flex flex-1 flex-col items-end pr-[14px]">
      <Ico w={14} h={14} className="mt-[13px]" stroke="#333" sw={2.6}>
        <path d="M1 1l12 12M13 1L1 13" />
      </Ico>
      <div className="mt-[38px] flex h-[34px] w-[78px] items-center justify-center border border-[#707070] bg-[#dedede] pt-px text-[18.500px] tracking-[-0.200px]">
        Open
      </div>
    </div>
  </div>
);

const App = () => (
  <div className="relative flex h-[1080px] w-[1920px] flex-col overflow-hidden bg-[#efefef] font-['Open_Sans',sans-serif]">
    <TitleBar />
    <MenuBar />
    <Ribbon />
    <FormulaBar />
    <Sheet />
    <SheetTabs />
    <StatusBar />
    <Taskbar />
    <Toast />
  </div>
);

export default App;
